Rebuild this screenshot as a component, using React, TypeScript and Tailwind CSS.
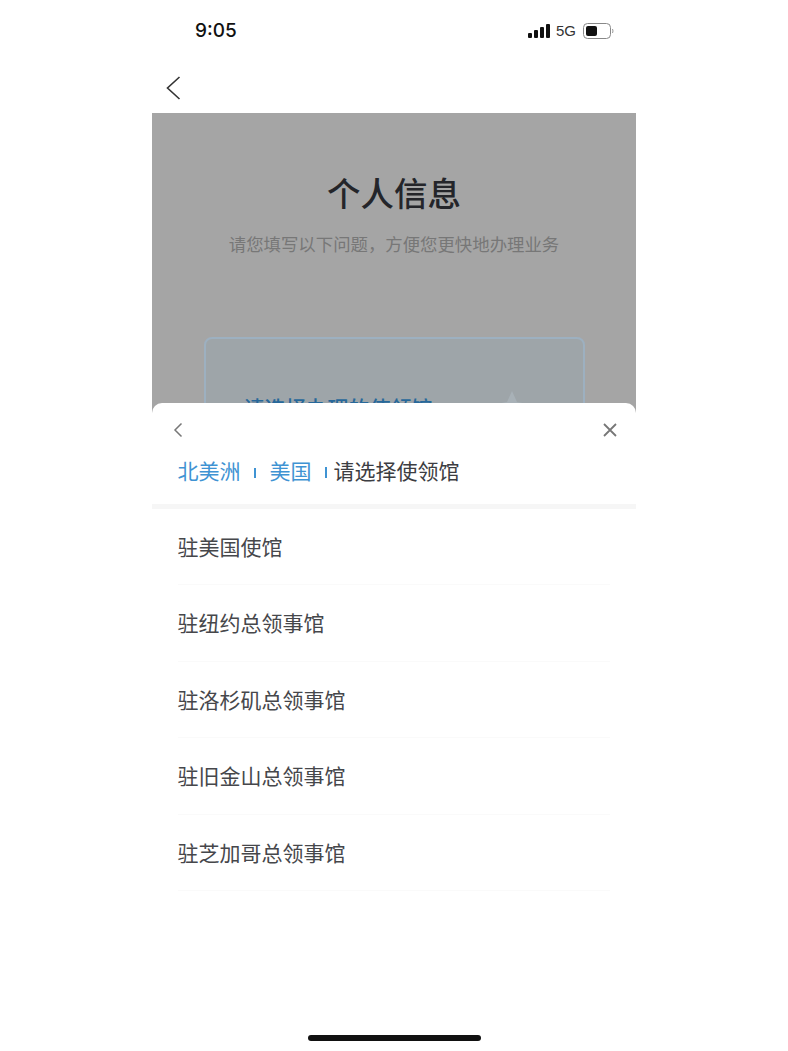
import React from "react";

const items = ["驻美国使馆", "驻纽约总领事馆", "驻洛杉矶总领事馆", "驻旧金山总领事馆", "驻芝加哥总领事馆"];
const cjk = { fontFamily: '"Noto Sans CJK SC", sans-serif' };

export default function App() {
  return (
    <div className="w-[788px] h-[1051px] bg-white overflow-hidden flex justify-center" style={cjk}>
      <div className="w-[484px] h-full flex flex-col relative">
        {/* status bar */}
        <div className="h-[60px] shrink-0 flex items-start justify-between pt-[19px] pl-[43px] pr-[22px]">
          <span className="text-[19px] leading-[24px] font-medium text-[#111]" style={{ fontFamily: 'Inter, sans-serif' }}>9:05</span>
          <div className="flex items-center gap-[6px] mt-[3px] h-[18px]">
            <svg width="22" height="14" viewBox="0 0 22 14" className="fill-[#111] -ml-[2px]">
              <rect x="0" y="9" width="4" height="5" rx="1" />
              <rect x="6" y="6" width="4" height="8" rx="1" />
              <rect x="12" y="3" width="4" height="11" rx="1" />
              <rect x="18" y="0" width="4" height="14" rx="1" />
            </svg>
            <span className="text-[15px] leading-[18px] text-[#333]" style={{ fontFamily: '"Liberation Sans", sans-serif' }}>5G</span>
            <svg width="31" height="16" viewBox="0 0 31 16" className="ml-[1px]">
              <rect x="0.5" y="0.5" width="27" height="15" rx="4" fill="none" stroke="#888" />
              <rect x="3" y="3" width="11" height="10" rx="2" fill="#111" />
              <path d="M29.5 6 Q30.5 8 29.5 10" fill="none" stroke="#999" />
            </svg>
          </div>
        </div>
        {/* nav */}
        <div className="h-[53px] shrink-0 flex items-start pl-[14px] pt-[16px]">
          <svg width="16" height="24" viewBox="0 0 16 24" fill="none" stroke="#333" strokeWidth="1.6">
            <path d="M13.5 1 L1.5 12 L13.5 23" />
          </svg>
        </div>
        {/* dimmed page */}
        <div className="h-[300px] shrink-0 bg-[#a5a5a5] overflow-hidden flex flex-col items-center">
          <div className="mt-[57px] text-[33.5px] leading-[44px] font-medium text-[#24252a]">个人信息</div>
          <div className="mt-[17px] text-[17.4px] leading-[26px] text-[#777777]">请您填写以下问题，方便您更快地办理业务</div>
          <div className="mt-[80px] w-[381px] h-[120px] shrink-0 border-2 border-[#9db0c0] rounded-[8px] bg-[#9ea5a9] flex justify-between pl-[38px] pr-[55px] pt-[52px]">
            <span className="text-[21px] leading-[32px] font-medium text-[#27689a]">请选择办理的使领馆</span>
            <svg width="32" height="32" viewBox="0 0 32 32" className="fill-[#a8b1b7] shrink-0">
              <path d="M16 0 L21 11 L32 13 L24 22 L26 32 L16 27 L6 32 L8 22 L0 13 L11 11 Z" />
            </svg>
          </div>
        </div>
        {/* bottom sheet */}
        <div className="relative -mt-[10px] flex-1 bg-white rounded-t-[10px]">
          <div className="flex items-center justify-between pl-[21px] pr-[18px] pt-[7px] h-[46px]">
            <svg width="10" height="16" viewBox="0 0 10 16" fill="none" stroke="#777" strokeWidth="1.5">
              <path d="M8.5 1.5 L2 8 L8.5 14.5" />
            </svg>
            <svg width="16" height="16" viewBox="0 0 16 16" fill="none" stroke="#777" strokeWidth="1.8">
              <path d="M2 2 L14 14 M14 2 L2 14" />
            </svg>
          </div>
          <div className="h-[55px] flex items-start pl-[25.5px] pt-[5px] text-[21px] leading-[32px]">
            <span className="text-[#3f93d3]">北美洲</span>
            <span className="w-[2px] h-[10px] bg-[#3f93d3] ml-[13px] mt-[14px]" />
            <span className="text-[#3f93d3] ml-[14px]">美国</span>
            <span className="w-[2px] h-[11px] bg-[#3f93d3] ml-[13px] mt-[13px]" />
            <span className="text-[#3c3d42] ml-[7px]">请选择使领馆</span>
          </div>
          <div className="h-[5px] bg-[#f6f6f6]" />
          <div className="flex flex-col pl-[25.5px] pr-[26px]">
            {items.map((t) => (
              <div key={t} className="h-[76.4px] flex items-center border-b border-[#fafafa] text-[21px] text-[#46474b]">
                {t}
              </div>
            ))}
          </div>
          <div className="absolute left-[156px] bottom-[10px] w-[173px] h-[6px] rounded-full bg-[#111]" />
        </div>
      </div>
    </div>
  );
}
